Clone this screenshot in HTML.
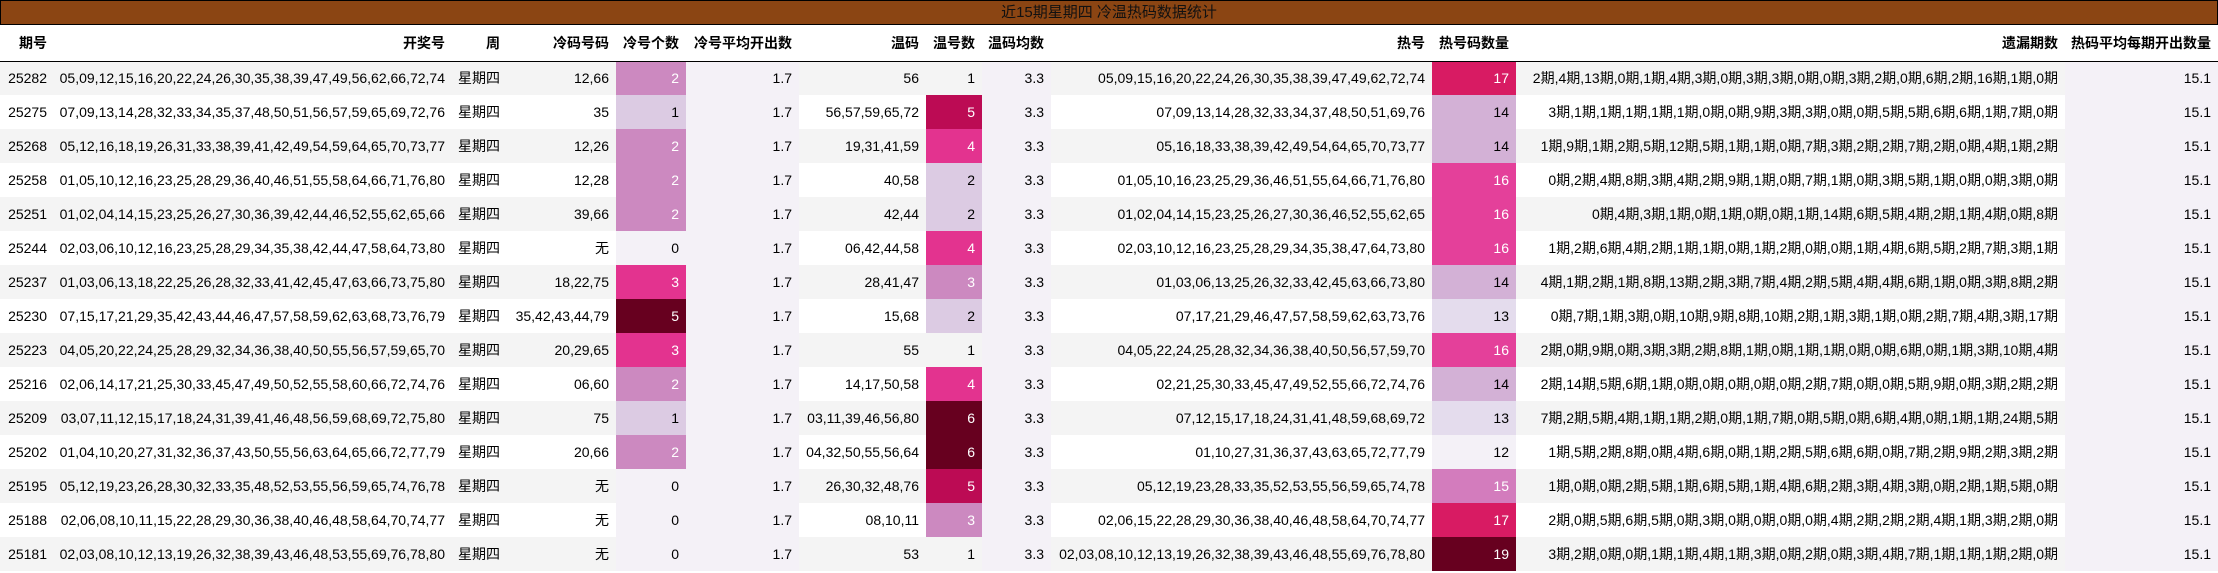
<!DOCTYPE html>
<html><head><meta charset="utf-8">
<style>
*{margin:0;padding:0;box-sizing:border-box}
html,body{width:2218px;height:573px;background:#fff;overflow:hidden}
body{font-family:"Liberation Sans","Noto Sans CJK SC",sans-serif;font-size:14px;color:#000}
.title{position:absolute;left:0;top:0;width:2218px;height:25px;background:#8B4513;border:1px solid #000;text-align:center;line-height:23px;font-size:15px;color:#111}
table{position:absolute;left:0;top:25px;width:2218px;border-collapse:collapse;table-layout:fixed}
th{height:36px;font-weight:bold;text-align:right;padding-right:7px;border-bottom:1px solid #000;white-space:nowrap;overflow:hidden}
td{height:34px;text-align:right;padding-right:7px;white-space:nowrap;overflow:hidden}
tr.o td{background:#f4f4f4}
td.l{background:#f4f1f7!important}
td.c0{background:#f4f1f7!important}
td.c1{background:#dccbe3!important;color:#000}
td.c2{background:#cc89c0!important;color:#fff}
td.c3{background:#e3338f!important;color:#fff}
td.c4{background:#bc0b54!important;color:#fff}
td.c5{background:#67001f!important;color:#fff}
td.h12{background:#f4f1f7!important}
td.h13{background:#e4dced!important}
td.h14{background:#d3b1d6!important}
td.h15{background:#d37cbd!important;color:#fff}
td.h16{background:#e4409a!important;color:#fff}
td.h17{background:#d81b63!important;color:#fff}
td.h19{background:#67001f!important;color:#fff}
</style></head><body>
<div class="title">近15期星期四 冷温热码数据统计</div>
<table>
<colgroup>
<col style="width:54px"><col style="width:398px"><col style="width:55px"><col style="width:109px"><col style="width:70px"><col style="width:113px"><col style="width:127px"><col style="width:56px"><col style="width:69px"><col style="width:381px"><col style="width:84px"><col style="width:549px"><col style="width:153px">
</colgroup>
<tr><th>期号</th><th>开奖号</th><th>周</th><th>冷码号码</th><th>冷号个数</th><th>冷号平均开出数</th><th>温码</th><th>温号数</th><th>温码均数</th><th>热号</th><th>热号码数量</th><th>遗漏期数</th><th>热码平均每期开出数量</th></tr>
<tr class="o"><td>25282</td><td>05,09,12,15,16,20,22,24,26,30,35,38,39,47,49,56,62,66,72,74</td><td>星期四</td><td>12,66</td><td class="c2">2</td><td class="l">1.7</td><td>56</td><td>1</td><td class="l">3.3</td><td>05,09,15,16,20,22,24,26,30,35,38,39,47,49,62,72,74</td><td class="h17">17</td><td>2期,4期,13期,0期,1期,4期,3期,0期,3期,3期,0期,0期,3期,2期,0期,6期,2期,16期,1期,0期</td><td class="l">15.1</td></tr>
<tr><td>25275</td><td>07,09,13,14,28,32,33,34,35,37,48,50,51,56,57,59,65,69,72,76</td><td>星期四</td><td>35</td><td class="c1">1</td><td class="l">1.7</td><td>56,57,59,65,72</td><td class="c4">5</td><td class="l">3.3</td><td>07,09,13,14,28,32,33,34,37,48,50,51,69,76</td><td class="h14">14</td><td>3期,1期,1期,1期,1期,1期,0期,0期,9期,3期,3期,0期,0期,5期,5期,6期,6期,1期,7期,0期</td><td class="l">15.1</td></tr>
<tr class="o"><td>25268</td><td>05,12,16,18,19,26,31,33,38,39,41,42,49,54,59,64,65,70,73,77</td><td>星期四</td><td>12,26</td><td class="c2">2</td><td class="l">1.7</td><td>19,31,41,59</td><td class="c3">4</td><td class="l">3.3</td><td>05,16,18,33,38,39,42,49,54,64,65,70,73,77</td><td class="h14">14</td><td>1期,9期,1期,2期,5期,12期,5期,1期,1期,0期,7期,3期,2期,2期,7期,2期,0期,4期,1期,2期</td><td class="l">15.1</td></tr>
<tr><td>25258</td><td>01,05,10,12,16,23,25,28,29,36,40,46,51,55,58,64,66,71,76,80</td><td>星期四</td><td>12,28</td><td class="c2">2</td><td class="l">1.7</td><td>40,58</td><td class="c1">2</td><td class="l">3.3</td><td>01,05,10,16,23,25,29,36,46,51,55,64,66,71,76,80</td><td class="h16">16</td><td>0期,2期,4期,8期,3期,4期,2期,9期,1期,0期,7期,1期,0期,3期,5期,1期,0期,0期,3期,0期</td><td class="l">15.1</td></tr>
<tr class="o"><td>25251</td><td>01,02,04,14,15,23,25,26,27,30,36,39,42,44,46,52,55,62,65,66</td><td>星期四</td><td>39,66</td><td class="c2">2</td><td class="l">1.7</td><td>42,44</td><td class="c1">2</td><td class="l">3.3</td><td>01,02,04,14,15,23,25,26,27,30,36,46,52,55,62,65</td><td class="h16">16</td><td>0期,4期,3期,1期,0期,1期,0期,0期,1期,14期,6期,5期,4期,2期,1期,4期,0期,8期</td><td class="l">15.1</td></tr>
<tr><td>25244</td><td>02,03,06,10,12,16,23,25,28,29,34,35,38,42,44,47,58,64,73,80</td><td>星期四</td><td>无</td><td class="c0">0</td><td class="l">1.7</td><td>06,42,44,58</td><td class="c3">4</td><td class="l">3.3</td><td>02,03,10,12,16,23,25,28,29,34,35,38,47,64,73,80</td><td class="h16">16</td><td>1期,2期,6期,4期,2期,1期,1期,0期,1期,2期,0期,0期,1期,4期,6期,5期,2期,7期,3期,1期</td><td class="l">15.1</td></tr>
<tr class="o"><td>25237</td><td>01,03,06,13,18,22,25,26,28,32,33,41,42,45,47,63,66,73,75,80</td><td>星期四</td><td>18,22,75</td><td class="c3">3</td><td class="l">1.7</td><td>28,41,47</td><td class="c2">3</td><td class="l">3.3</td><td>01,03,06,13,25,26,32,33,42,45,63,66,73,80</td><td class="h14">14</td><td>4期,1期,2期,1期,8期,13期,2期,3期,7期,4期,2期,5期,4期,4期,6期,1期,0期,3期,8期,2期</td><td class="l">15.1</td></tr>
<tr><td>25230</td><td>07,15,17,21,29,35,42,43,44,46,47,57,58,59,62,63,68,73,76,79</td><td>星期四</td><td>35,42,43,44,79</td><td class="c5">5</td><td class="l">1.7</td><td>15,68</td><td class="c1">2</td><td class="l">3.3</td><td>07,17,21,29,46,47,57,58,59,62,63,73,76</td><td class="h13">13</td><td>0期,7期,1期,3期,0期,10期,9期,8期,10期,2期,1期,3期,1期,0期,2期,7期,4期,3期,17期</td><td class="l">15.1</td></tr>
<tr class="o"><td>25223</td><td>04,05,20,22,24,25,28,29,32,34,36,38,40,50,55,56,57,59,65,70</td><td>星期四</td><td>20,29,65</td><td class="c3">3</td><td class="l">1.7</td><td>55</td><td>1</td><td class="l">3.3</td><td>04,05,22,24,25,28,32,34,36,38,40,50,56,57,59,70</td><td class="h16">16</td><td>2期,0期,9期,0期,3期,3期,2期,8期,1期,0期,1期,1期,0期,0期,6期,0期,1期,3期,10期,4期</td><td class="l">15.1</td></tr>
<tr><td>25216</td><td>02,06,14,17,21,25,30,33,45,47,49,50,52,55,58,60,66,72,74,76</td><td>星期四</td><td>06,60</td><td class="c2">2</td><td class="l">1.7</td><td>14,17,50,58</td><td class="c3">4</td><td class="l">3.3</td><td>02,21,25,30,33,45,47,49,52,55,66,72,74,76</td><td class="h14">14</td><td>2期,14期,5期,6期,1期,0期,0期,0期,0期,0期,2期,7期,0期,0期,5期,9期,0期,3期,2期,2期</td><td class="l">15.1</td></tr>
<tr class="o"><td>25209</td><td>03,07,11,12,15,17,18,24,31,39,41,46,48,56,59,68,69,72,75,80</td><td>星期四</td><td>75</td><td class="c1">1</td><td class="l">1.7</td><td>03,11,39,46,56,80</td><td class="c5">6</td><td class="l">3.3</td><td>07,12,15,17,18,24,31,41,48,59,68,69,72</td><td class="h13">13</td><td>7期,2期,5期,4期,1期,1期,2期,0期,1期,7期,0期,5期,0期,6期,4期,0期,1期,1期,24期,5期</td><td class="l">15.1</td></tr>
<tr><td>25202</td><td>01,04,10,20,27,31,32,36,37,43,50,55,56,63,64,65,66,72,77,79</td><td>星期四</td><td>20,66</td><td class="c2">2</td><td class="l">1.7</td><td>04,32,50,55,56,64</td><td class="c5">6</td><td class="l">3.3</td><td>01,10,27,31,36,37,43,63,65,72,77,79</td><td class="h12">12</td><td>1期,5期,2期,8期,0期,4期,6期,0期,1期,2期,5期,6期,6期,0期,7期,2期,9期,2期,3期,2期</td><td class="l">15.1</td></tr>
<tr class="o"><td>25195</td><td>05,12,19,23,26,28,30,32,33,35,48,52,53,55,56,59,65,74,76,78</td><td>星期四</td><td>无</td><td class="c0">0</td><td class="l">1.7</td><td>26,30,32,48,76</td><td class="c4">5</td><td class="l">3.3</td><td>05,12,19,23,28,33,35,52,53,55,56,59,65,74,78</td><td class="h15">15</td><td>1期,0期,0期,2期,5期,1期,6期,5期,1期,4期,6期,2期,3期,4期,3期,0期,2期,1期,5期,0期</td><td class="l">15.1</td></tr>
<tr><td>25188</td><td>02,06,08,10,11,15,22,28,29,30,36,38,40,46,48,58,64,70,74,77</td><td>星期四</td><td>无</td><td class="c0">0</td><td class="l">1.7</td><td>08,10,11</td><td class="c2">3</td><td class="l">3.3</td><td>02,06,15,22,28,29,30,36,38,40,46,48,58,64,70,74,77</td><td class="h17">17</td><td>2期,0期,5期,6期,5期,0期,3期,0期,0期,0期,0期,4期,2期,2期,2期,4期,1期,3期,2期,0期</td><td class="l">15.1</td></tr>
<tr class="o"><td>25181</td><td>02,03,08,10,12,13,19,26,32,38,39,43,46,48,53,55,69,76,78,80</td><td>星期四</td><td>无</td><td class="c0">0</td><td class="l">1.7</td><td>53</td><td>1</td><td class="l">3.3</td><td>02,03,08,10,12,13,19,26,32,38,39,43,46,48,55,69,76,78,80</td><td class="h19">19</td><td>3期,2期,0期,0期,1期,1期,4期,1期,3期,0期,2期,0期,3期,4期,7期,1期,1期,1期,2期,0期</td><td class="l">15.1</td></tr>
</table>
</body></html>
